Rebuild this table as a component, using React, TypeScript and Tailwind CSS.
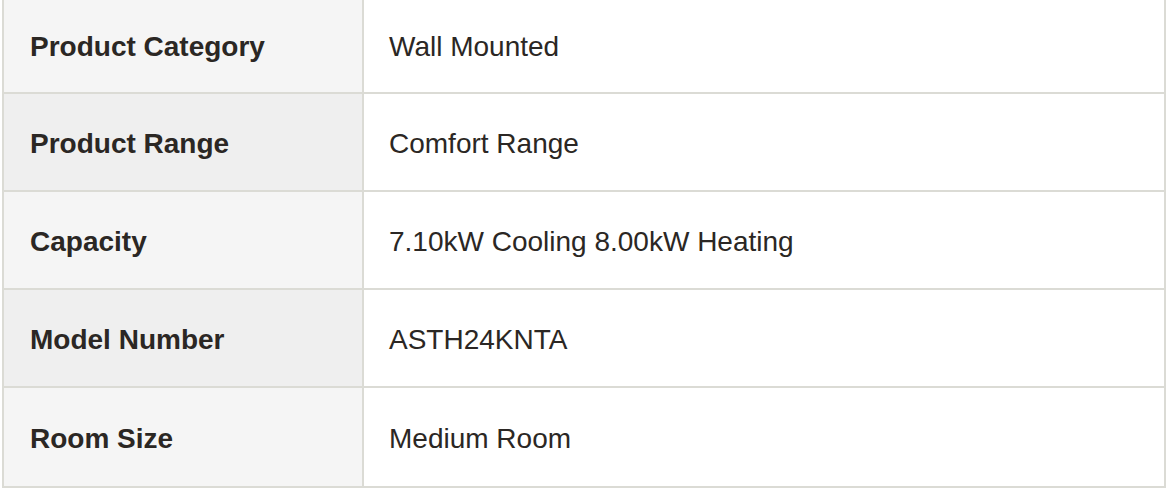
const specs = [
  { label: "Product Category", value: "Wall Mounted" },
  { label: "Product Range", value: "Comfort Range" },
  { label: "Capacity", value: "7.10kW Cooling 8.00kW Heating" },
  { label: "Model Number", value: "ASTH24KNTA" },
  { label: "Room Size", value: "Medium Room" },
];

export default function App() {
  return (
    <div className="min-h-screen bg-white font-['Liberation_Sans',Arial,sans-serif] text-[28px] text-[#2b2724]">
      <div className="-mt-[4px] ml-[2px] w-[1164px] border-2 border-[#dbdbd5] divide-y-2 divide-[#dbdbd5]">
        {specs.map((row, i) => (
          <div key={row.label} className="flex h-[98px] first:h-[96px]">
            <div
              className={
                (i % 2 === 0 ? "bg-[#f5f5f5]" : "bg-[#efefef]") +
                " flex w-[360px] items-center border-r-2 border-[#dbdbd5] pl-[26px] pr-6 pt-[4px] font-bold"
              }
            >
              {row.label}
            </div>
            <div className="flex flex-1 items-center bg-white pl-[25px] pr-6 pt-[4px]">
              {row.value}
            </div>
          </div>
        ))}
      </div>
    </div>
  );
}
